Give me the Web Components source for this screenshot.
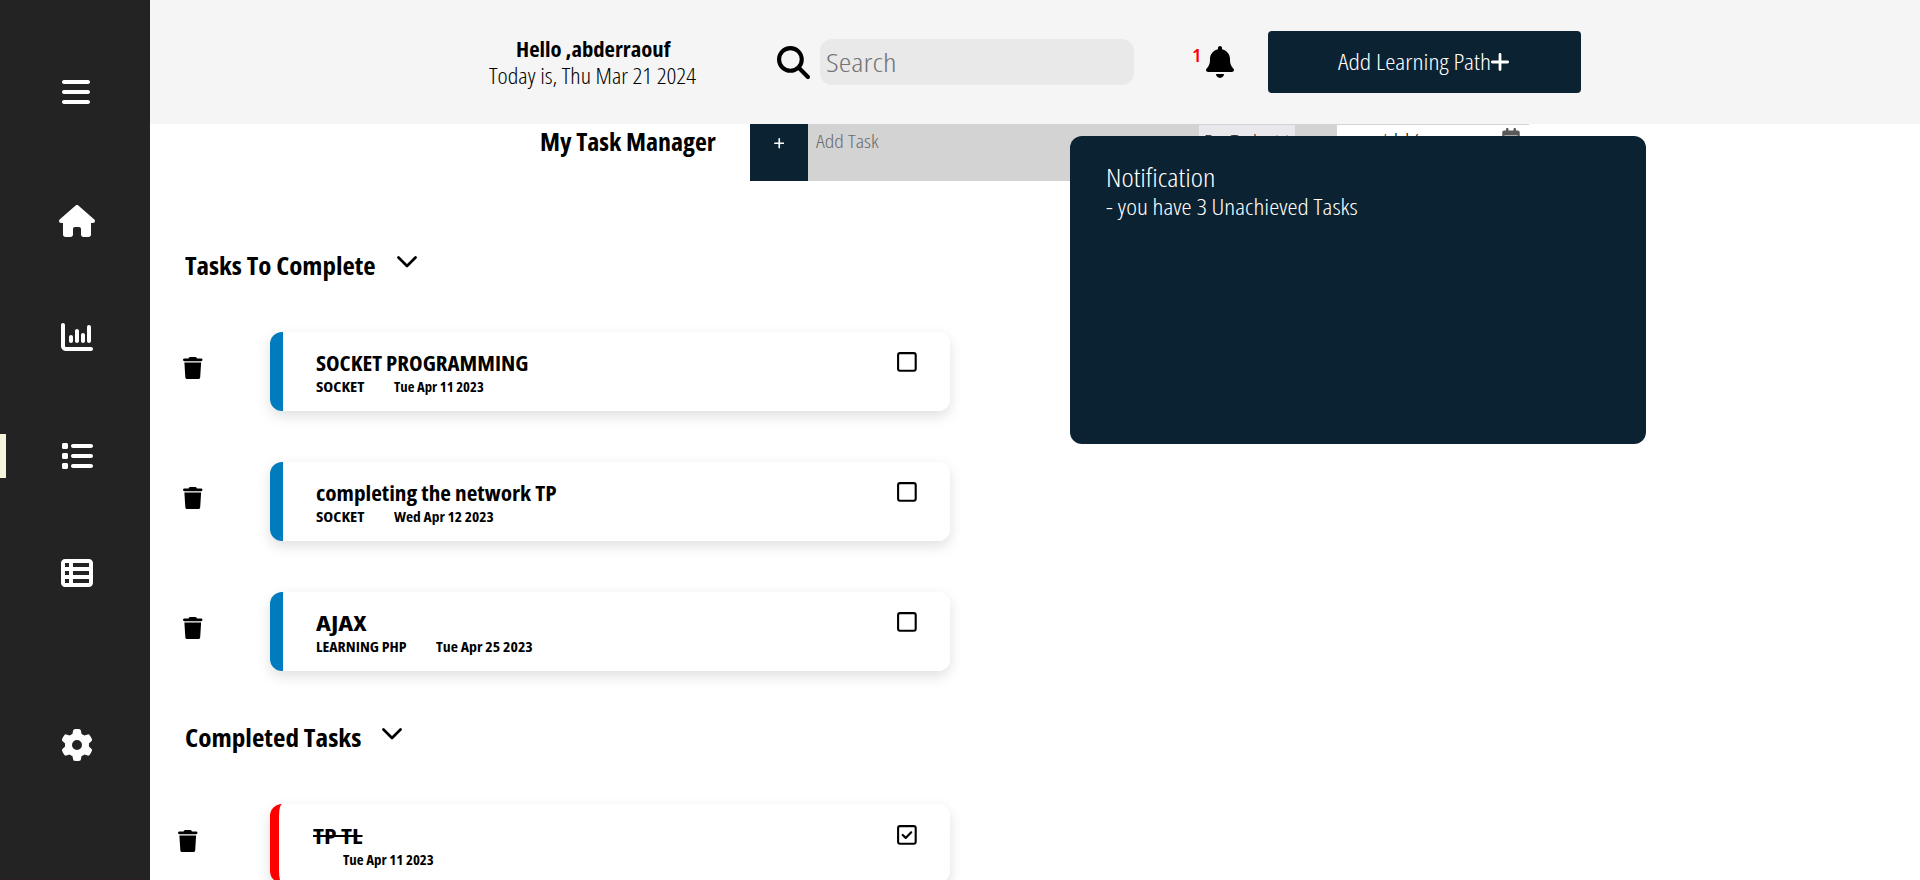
<!DOCTYPE html>
<html lang="en">
<head>
<meta charset="utf-8">
<title>My Task Manager</title>
<style>
  body { margin: 0; height: 880px; overflow: hidden; background: #fff; color: #000; font-family: "Open Sans", "Liberation Sans", sans-serif; }
</style>
</head>
<body>
<task-app></task-app>
<script>
/* Single line of condensed text, set to a given width. */
customElements.define('fit-text', class extends HTMLElement {
  connectedCallback() {
    const a = (n, d) => this.getAttribute(n) || d;
    const r = this.attachShadow({ mode: 'open' });
    r.innerHTML = `<style>
      :host { display: block; flex: none; width: ${a('w', 100)}px; height: ${a('lh', 24)}px; line-height: ${a('lh', 24)}px; text-align: left;
        font-size: ${a('size', 21.5)}px; font-weight: ${a('weight', 340)}; font-stretch: 80%; white-space: nowrap; }
      span { display: inline-block; transform-origin: 0 50%; }
      :host([strike]) span { text-decoration: line-through; text-decoration-thickness: 1.5px; }
    </style><span><slot></slot></span>`;
    const s = r.querySelector('span');
    s.style.transform = `scaleX(${a('w', 100) / s.offsetWidth})`;
  }
});

const ICONS = {
  bars: ['0 0 448 512', 'M0 96C0 78.300 14.300 64 32 64H416c17.700 0 32 14.300 32 32s-14.300 32-32 32H32C14.300 128 0 113.700 0 96zM0 256c0-17.700 14.300-32 32-32H416c17.700 0 32 14.300 32 32s-14.300 32-32 32H32c-17.700 0-32-14.300-32-32zM448 416c0 17.700-14.300 32-32 32H32c-17.700 0-32-14.300-32-32s14.300-32 32-32H416c17.700 0 32 14.300 32 32z'],
  house: ['0 0 576 512', 'M575.800 255.500c0 18-15 32.100-32 32.100h-32l.7 160.200c0 2.700-.2 5.400-.5 8.100V472c0 22.100-17.900 40-40 40H456c-1.100 0-2.200 0-3.300-.1c-1.400.1-2.800.1-4.200.1H416 392c-22.100 0-40-17.900-40-40V448 384c0-17.700-14.300-32-32-32H256c-17.700 0-32 14.300-32 32v64 24c0 22.100-17.900 40-40 40H160 128.100c-1.500 0-3-.1-4.500-.2c-1.200.1-2.400.2-3.600.2H104c-22.100 0-40-17.900-40-40V360c0-.9 0-1.900.1-2.800V287.600H32c-18 0-32-14-32-32.100c0-9 3-17 10-24L266.400 8c7-7 15-8 22-8s15 2 21 7L564.800 231.500c8 7 12 15 11 24z'],
  chart: ['0 0 512 512', 'M32 32c17.700 0 32 14.300 32 32V400c0 8.800 7.200 16 16 16H480c17.700 0 32 14.300 32 32s-14.300 32-32 32H80c-44.200 0-80-35.800-80-80V64C0 46.300 14.300 32 32 32zM160 224c17.700 0 32 14.300 32 32v64c0 17.700-14.300 32-32 32s-32-14.300-32-32V256c0-17.700 14.300-32 32-32zm128-64V320c0 17.700-14.300 32-32 32s-32-14.300-32-32V160c0-17.700 14.300-32 32-32s32 14.300 32 32zm64 32c17.700 0 32 14.300 32 32v96c0 17.700-14.300 32-32 32s-32-14.300-32-32V224c0-17.700 14.300-32 32-32zM480 96V320c0 17.700-14.300 32-32 32s-32-14.300-32-32V96c0-17.700 14.300-32 32-32s32 14.300 32 32z'],
  list: ['0 0 512 512', 'M40 48C26.700 48 16 58.700 16 72v48c0 13.300 10.700 24 24 24H88c13.300 0 24-10.700 24-24V72c0-13.300-10.700-24-24-24H40zM192 64c-17.700 0-32 14.300-32 32s14.300 32 32 32H480c17.700 0 32-14.300 32-32s-14.300-32-32-32H192zm0 160c-17.700 0-32 14.300-32 32s14.300 32 32 32H480c17.700 0 32-14.300 32-32s-14.300-32-32-32H192zm0 160c-17.700 0-32 14.300-32 32s14.300 32 32 32H480c17.700 0 32-14.300 32-32s-14.300-32-32-32H192zM16 232v48c0 13.300 10.700 24 24 24H88c13.300 0 24-10.700 24-24V232c0-13.300-10.700-24-24-24H40c-13.300 0-24 10.700-24 24zM40 368c-13.300 0-24 10.700-24 24v48c0 13.300 10.700 24 24 24H88c13.300 0 24-10.700 24-24V392c0-13.300-10.700-24-24-24H40z'],
  table: ['0 0 512 512', 'M0 96C0 60.700 28.700 32 64 32H448c35.300 0 64 28.700 64 64V416c0 35.300-28.700 64-64 64H64c-35.300 0-64-28.700-64-64V96zm64 0v64h64V96H64zm384 0H192v64H448V96zM64 224v64h64V224H64zm384 0H192v64H448V224zM64 352v64h64V352H64zm384 0H192v64H448V352z'],
  gear: ['0 0 512 512', 'M495.900 166.600c3.200 8.700.5 18.400-6.400 24.600l-43.300 39.400c1.100 8.300 1.700 16.800 1.700 25.400s-.6 17.100-1.700 25.400l43.300 39.400c6.900 6.200 9.600 15.900 6.400 24.600c-4.400 11.900-9.700 23.300-15.800 34.300l-4.700 8.100c-6.600 11-14 21.400-22.100 31.200c-5.900 7.200-15.700 9.600-24.500 6.800l-55.700-17.700c-13.400 10.300-28.200 18.900-44 25.400l-12.500 57.100c-2 9.100-9 16.300-18.200 17.800c-13.800 2.300-28 3.500-42.500 3.500s-28.700-1.200-42.500-3.500c-9.200-1.500-16.200-8.700-18.200-17.800l-12.500-57.100c-15.800-6.500-30.600-15.100-44-25.400L83.100 425.900c-8.800 2.800-18.600.3-24.500-6.800c-8.100-9.800-15.500-20.200-22.100-31.200l-4.700-8.100c-6.100-11-11.400-22.400-15.800-34.300c-3.200-8.700-.5-18.400 6.400-24.600l43.300-39.400C64.600 273.100 64 264.600 64 256s.6-17.100 1.700-25.400L22.400 191.200c-6.900-6.200-9.600-15.900-6.400-24.600c4.400-11.900 9.700-23.300 15.800-34.300l4.700-8.100c6.600-11 14-21.400 22.100-31.200c5.900-7.200 15.700-9.600 24.500-6.800l55.700 17.700c13.400-10.300 28.200-18.900 44-25.400l12.500-57.100c2-9.100 9-16.300 18.200-17.800C227.300 1.200 241.500 0 256 0s28.700 1.200 42.500 3.500c9.200 1.500 16.200 8.700 18.200 17.800l12.500 57.100c15.800 6.500 30.600 15.100 44 25.400l55.700-17.700c8.800-2.800 18.600-.3 24.500 6.800c8.100 9.800 15.500 20.200 22.100 31.200l4.700 8.100c6.100 11 11.400 22.400 15.800 34.300zM256 336a80 80 0 1 0 0-160 80 80 0 1 0 0 160z'],
  search: ['0 0 512 512', 'M416 208c0 45.900-14.900 88.300-40 122.700L502.600 457.400c12.500 12.500 12.500 32.800 0 45.300s-32.800 12.500-45.300 0L330.700 376c-34.400 25.200-76.800 40-122.700 40C93.100 416 0 322.900 0 208S93.100 0 208 0S416 93.100 416 208zM208 352a144 144 0 1 0 0-288 144 144 0 1 0 0 288z'],
  bell: ['0 0 448 512', 'M224 0c-17.700 0-32 14.300-32 32V51.200C119 66 64 130.600 64 208v18.800c0 47-17.300 92.400-48.500 127.600l-7.400 8.300c-8.400 9.400-10.400 22.900-5.300 34.400S19.400 416 32 416H416c12.600 0 24-7.400 29.200-18.900s3.100-25-5.300-34.400l-7.400-8.300C401.300 319.200 384 273.900 384 226.800V208c0-77.400-55-142-128-156.800V32c0-17.700-14.300-32-32-32zm45.300 493.300c12-12 18.700-28.300 18.700-45.300H224 160c0 17 6.700 33.300 18.700 45.300s28.300 18.700 45.300 18.700s33.300-6.700 45.300-18.700z'],
  plus: ['16 48 416 416', 'M256 80c0-17.700-14.300-32-32-32s-32 14.300-32 32V224H48c-17.700 0-32 14.300-32 32s14.300 32 32 32H192V432c0 17.700 14.300 32 32 32s32-14.300 32-32V288H400c17.700 0 32-14.300 32-32s-14.300-32-32-32H256V80z'],
  trash: ['0 0 448 512', 'M135.200 17.700L128 32H32C14.300 32 0 46.300 0 64S14.300 96 32 96H416c17.700 0 32-14.300 32-32s-14.300-32-32-32H320l-7.200-14.300C307.400 6.800 296.300 0 284.200 0H163.800c-12.100 0-23.200 6.800-28.600 17.700zM416 128H32L53.200 467c1.600 25.300 22.600 45 47.900 45H346.900c25.300 0 46.300-19.700 47.900-45L416 128z'],
  calendar: ['0 0 448 512', 'M128 0c17.700 0 32 14.300 32 32V64H288V32c0-17.700 14.300-32 32-32s32 14.300 32 32V64h48c26.500 0 48 21.500 48 48V464c0 26-22 48-48 48H48c-26 0-48-22-48-48V112C0 85.500 21.500 64 48 64H96V32c0-17.700 14.300-32 32-32zM56 192V456H392V192z']
};
customElements.define('ui-icon', class extends HTMLElement {
  connectedCallback() {
    const n = this.getAttribute('name'), w = this.getAttribute('w'), h = this.getAttribute('h');
    let svg;
    if (n === 'chevron') svg = '<svg viewBox="0 0 20 12"><path d="M1.500 1.500 10 10 18.500 1.500" fill="none" stroke="currentColor" stroke-width="2.700" stroke-linecap="round" stroke-linejoin="round"/></svg>';
    else if (n === 'box' || n === 'checked') svg = '<svg viewBox="0 0 20 20"><rect x="1.100" y="1.100" width="17.600" height="17.600" rx="1.900" fill="none" stroke="currentColor" stroke-width="2.100"/>' + (n === 'checked' ? '<path d="M5.700 10 8.700 12.900 14.200 7.300" fill="none" stroke="currentColor" stroke-width="2.200" stroke-linecap="round" stroke-linejoin="round"/>' : '') + '</svg>';
    else svg = `<svg viewBox="${ICONS[n][0]}"><path fill="currentColor" fill-rule="evenodd" d="${ICONS[n][1]}"/></svg>`;
    this.attachShadow({ mode: 'open' }).innerHTML = `<style>:host{display:block;flex:none;width:${w}px;height:${h}px}svg{display:block;width:100%;height:100%}</style>${svg}`;
  }
});

const define = (name, html) => {
  const t = document.createElement('template');
  t.innerHTML = html;
  customElements.define(name, class extends HTMLElement {
    constructor() { super(); this.attachShadow({ mode: 'open' }).append(t.content.cloneNode(true)); }
  });
};

define('side-bar', `<style>
  :host { display: flex; flex-direction: column; box-sizing: border-box; width: 150px; height: 880px; padding-top: 76px; background: #232323; border-bottom: 1px solid #2b2025; color: #fff; }
  div { display: flex; align-items: center; box-sizing: border-box; height: 32px; padding-left: 60.500px; }
  .active { height: 44px; margin: 78.500px 0 0; padding-left: 54.500px; border-left: 6px solid beige; }
</style>
<div style="padding-left:61.500px"><ui-icon name="bars" w="28" h="32"></ui-icon></div>
<div style="margin-top:96.500px;padding-left:59px"><ui-icon name="house" w="36" h="32"></ui-icon></div>
<div style="margin-top:84.500px"><ui-icon name="chart" w="32" h="32"></ui-icon></div>
<div class="active" style="margin-top:81px"><ui-icon name="list" w="32" h="32" style="margin-top:-1px"></ui-icon></div>
<div style="margin-top:78.500px"><ui-icon name="table" w="32" h="32"></ui-icon></div>
<div style="margin-top:140px"><ui-icon name="gear" w="32" h="32"></ui-icon></div>`);

define('top-bar', `<style>
  :host { display: flex; align-items: center; box-sizing: border-box; height: 124px; padding-left: 338px; background: #f5f5f5; }
  .hello { width: 209px; display: flex; flex-direction: column; align-items: center; margin-right: 80px; }
  .field { display: flex; align-items: center; box-sizing: border-box; width: 314px; height: 46px; margin-left: 10px; padding-left: 6px; border-radius: 12px; background: #e9e9e9; color: #757575; }
  .bell { display: flex; align-items: flex-start; margin-left: 58px; color: red; }
  .bell ui-icon { color: #000; margin: -1px 0 0 5px; }
  button { display: flex; align-items: center; box-sizing: border-box; width: 313px; height: 62px; margin: 0 0 0 34px; padding: 0 0 0 70px; border: 0; border-radius: 4px; background: #0b2232; color: #fff; font-family: inherit; }
</style>
<div class="hello"><fit-text w="154" lh="27" weight="700">Hello ,abderraouf</fit-text><fit-text w="207" lh="27">Today is, Thu Mar 21 2024</fit-text></div>
<ui-icon name="search" w="33" h="33"></ui-icon>
<div class="field"><fit-text w="70" lh="46" size="26">Search</fit-text></div>
<div class="bell"><fit-text w="9" lh="16" size="18.500" weight="600">1</fit-text><ui-icon name="bell" w="28" h="32"></ui-icon></div>
<button><fit-text w="153" lh="62">Add Learning Path</fit-text><ui-icon name="plus" w="18" h="18"></ui-icon></button>`);

define('add-task', `<style>
  :host { display: flex; height: 57px; padding-left: 390px; }
  .plus { display: flex; justify-content: center; width: 58px; margin-left: 34px; background: #0b2232; color: #fff; }
  .bar { display: flex; box-sizing: border-box; width: 721px; height: 57px; padding-left: 7.500px; background: #d3d3d3; color: #6b6b6b; }
  .select { display: flex; align-items: flex-start; box-sizing: border-box; width: 96px; height: 30px; margin: 1px 0 0 320.500px; padding: 1.500px 0 0 5px; background: #e9e9ed; color: #222; }
  .select ui-icon { margin: 8px 0 0 4px; }
  .date { display: flex; box-sizing: border-box; width: 192px; height: 56px; margin: 1px 0 0 42px; padding: 1px 0 0 11px; background: #fff; color: #111; }
  .date ui-icon { margin: 2px 0 0 39px; color: #5a5a5a; }
</style>
<fit-text w="176" lh="34" size="25.500" weight="700">My Task Manager</fit-text>
<div class="plus"><ui-icon name="plus" w="10.500" h="10.500" style="margin-top:14px"></ui-icon></div>
<div class="bar"><fit-text w="63" lh="35" size="19">Add Task</fit-text>
<div class="select"><fit-text w="68" lh="28" size="19">For Today</fit-text><ui-icon name="chevron" w="12" h="8"></ui-icon></div>
<div class="date"><fit-text w="32" lh="28" size="19">mm</fit-text><fit-text w="7" lh="28" size="19">/</fit-text><fit-text w="23" lh="28" size="19">dd</fit-text><fit-text w="9" lh="28" size="19">/</fit-text><fit-text w="44" lh="28" size="19">yyyy</fit-text><ui-icon name="calendar" w="18" h="20"></ui-icon></div></div>`);

define('section-title', `<style>
  :host { display: flex; align-items: flex-start; height: 40px; padding-left: 34.500px; }
  ::slotted(ui-icon) { margin: 11px 0 0 21px; }
</style><slot></slot>`);

define('task-row', `<style>
  :host { display: grid; grid-template-columns: 87px 680px; padding-left: 33px; }
  .trash { padding-top: 25px; }
  article { display: flex; justify-content: space-between; box-sizing: border-box; height: 79px; padding: 19px 33.500px 0 46px; border-radius: 12px; background: linear-gradient(90deg, #007bbd 13px, #fff 13px); box-shadow: 0 5px 14px rgba(0,0,0,.13); }
  :host([done]) { grid-template-columns: 92px 680px; padding-left: 28px; }
  :host([done]) .trash { padding-top: 26px; }
  :host([done]) article { background: #fff; border-left: 9px solid red; padding-top: 20px; padding-left: 33.500px; }
  .meta { display: flex; height: 22px; }
</style>
<div class="trash"><ui-icon name="trash" w="19.500" h="22.300"></ui-icon></div>
<article><div><slot name="title"></slot><div class="meta"><slot></slot></div></div><slot name="check"></slot></article>`);

define('notification-panel', `<style>
  :host { display: block; box-sizing: border-box; position: absolute; left: 1070px; top: 136px; width: 576px; height: 308px; padding: 26px 35.500px; border-radius: 12px; background: #0b2232; color: #fff; }
</style>
<fit-text w="110" lh="31" size="25.500">Notification</fit-text>
<fit-text w="252" lh="28">- you have 3 Unachieved Tasks</fit-text>`);

define('task-app', `<style>
  :host { display: grid; grid-template-columns: 150px 1fr; height: 880px; overflow: hidden; }
  main { height: 880px; overflow: hidden; }
  .list { display: flex; flex-direction: column; gap: 51px; margin: 47px 0 46px; }
  task-row ui-icon { margin-top: 1px; }
</style>
<side-bar></side-bar>
<main>
  <top-bar></top-bar>
  <add-task></add-task>
  <section-title style="margin-top:64px"><fit-text w="191" lh="40" size="25.500" weight="680">Tasks To Complete</fit-text><ui-icon name="chevron" w="20" h="12"></ui-icon></section-title>
  <div class="list">
    <task-row><fit-text slot="title" w="212" weight="680">SOCKET PROGRAMMING</fit-text><fit-text w="48" lh="22" size="14.700" weight="680">SOCKET</fit-text><fit-text w="90" lh="22" size="14.700" weight="680" style="margin-left:30px">Tue Apr 11 2023</fit-text><ui-icon slot="check" name="box" w="20" h="20"></ui-icon></task-row>
    <task-row><fit-text slot="title" w="241" weight="680">completing the network TP</fit-text><fit-text w="48" lh="22" size="14.700" weight="680">SOCKET</fit-text><fit-text w="100" lh="22" size="14.700" weight="680" style="margin-left:30px">Wed Apr 12 2023</fit-text><ui-icon slot="check" name="box" w="20" h="20"></ui-icon></task-row>
    <task-row><fit-text slot="title" w="50" weight="680">AJAX</fit-text><fit-text w="91" lh="22" size="14.700" weight="680">LEARNING PHP</fit-text><fit-text w="97" lh="22" size="14.700" weight="680" style="margin-left:29px">Tue Apr 25 2023</fit-text><ui-icon slot="check" name="box" w="20" h="20"></ui-icon></task-row>
  </div>
  <section-title><fit-text w="176" lh="40" size="25.500" weight="680">Completed Tasks</fit-text><ui-icon name="chevron" w="20" h="12"></ui-icon></section-title>
  <div class="list">
    <task-row done><fit-text slot="title" strike w="50" weight="680">TP TL</fit-text><fit-text w="91" lh="22" size="14.700" weight="680" style="margin-left:30px">Tue Apr 11 2023</fit-text><ui-icon slot="check" name="checked" w="20" h="20"></ui-icon></task-row>
  </div>
</main>
<notification-panel></notification-panel>`);
</script>
</body>
</html>
